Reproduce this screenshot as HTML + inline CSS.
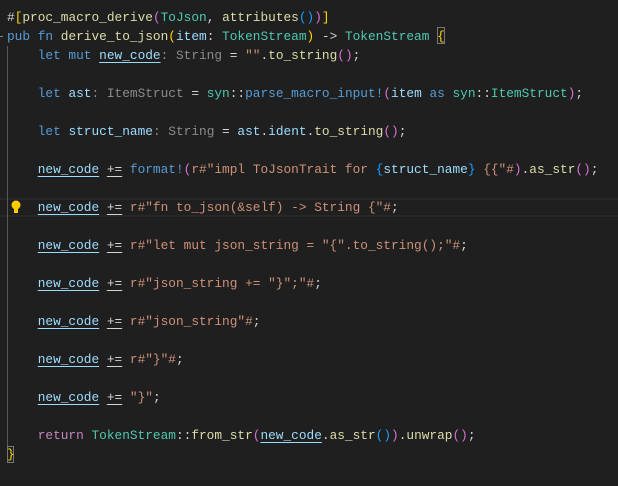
<!DOCTYPE html>
<html><head><meta charset="utf-8"><style>
body{margin:0;width:618px;height:486px;background:#1f1f1f;overflow:hidden;position:relative;font-family:"Liberation Mono",monospace;font-size:12.8px;color:#d4d4d4}
.l{position:absolute;left:7px;height:19px;line-height:19px;white-space:pre}
.k{color:#569cd6}.c{color:#c586c0}.t{color:#4ec9b0}.f{color:#dcdcaa}.v{color:#9cdcfe}.s{color:#ce9178}.h{color:#8b8b8b}
.g{color:#ffd700}.o{color:#da70d6}.b{color:#179fff}
.u{text-decoration:underline;text-underline-offset:3px}
.cur{position:absolute;left:0;width:618px;top:198px;height:19px;border-top:2px solid #282828;border-bottom:2px solid #282828;box-sizing:border-box}
</style></head><body>
<div class="cur"></div>
<div style="position:absolute;left:7px;top:46px;width:1px;height:400px;background:#585858"></div>
<div style="position:absolute;left:0;top:36px;width:3px;height:1px;background:#888"></div>
<div style="position:absolute;left:7px;top:446px;width:7px;height:17px;border:1px solid #777;box-sizing:border-box"></div>
<div style="position:absolute;left:437px;top:27px;width:8px;height:17px;border:1px solid #777;box-sizing:border-box"></div>
<svg style="position:absolute;left:10px;top:199px" width="12" height="16" viewBox="0 0 12 16"><circle cx="6" cy="6" r="4.5" fill="#ffcc00"/><rect x="4" y="10" width="4" height="4" fill="#ffcc00"/></svg>
<div class="l" style="top:8px">#<span class="g">[</span><span class="f">proc_macro_derive</span><span class="o">(</span><span class="t">ToJson</span>, <span class="f">attributes</span><span class="b">()</span><span class="o">)</span><span class="g">]</span></div>
<div class="l" style="top:27px"><span class="k">pub fn</span> <span class="f">derive_to_json</span><span class="g">(</span><span class="v">item</span>: <span class="t">TokenStream</span><span class="g">)</span> -&gt; <span class="t">TokenStream</span> <span class="g">{</span></div>
<div class="l" style="top:46px">    <span class="k">let mut</span> <span class="v u">new_code</span><span class="h">: String</span> = <span class="s">""</span>.<span class="f">to_string</span><span class="o">()</span>;</div>
<div class="l" style="top:84px">    <span class="k">let</span> <span class="v">ast</span><span class="h">: ItemStruct</span> = <span class="t">syn</span>::<span class="k">parse_macro_input!</span><span class="o">(</span><span class="v">item</span> <span class="k">as</span> <span class="t">syn</span>::<span class="t">ItemStruct</span><span class="o">)</span>;</div>
<div class="l" style="top:122px">    <span class="k">let</span> <span class="v">struct_name</span><span class="h">: String</span> = <span class="v">ast</span>.<span class="v">ident</span>.<span class="f">to_string</span><span class="o">()</span>;</div>
<div class="l" style="top:160px">    <span class="v u">new_code</span> <span class="u">+=</span> <span class="k">format!</span><span class="o">(</span><span class="s">r#"impl ToJsonTrait for </span><span class="b">{</span><span class="v">struct_name</span><span class="b">}</span><span class="s"> {{"#</span><span class="o">)</span>.<span class="f">as_str</span><span class="o">()</span>;</div>
<div class="l" style="top:198px">    <span class="v u">new_code</span> <span class="u">+=</span> <span class="s">r#"fn to_json(&amp;self) -&gt; String {"#</span>;</div>
<div class="l" style="top:236px">    <span class="v u">new_code</span> <span class="u">+=</span> <span class="s">r#"let mut json_string = "{".to_string();"#</span>;</div>
<div class="l" style="top:274px">    <span class="v u">new_code</span> <span class="u">+=</span> <span class="s">r#"json_string += "}";"#</span>;</div>
<div class="l" style="top:312px">    <span class="v u">new_code</span> <span class="u">+=</span> <span class="s">r#"json_string"#</span>;</div>
<div class="l" style="top:350px">    <span class="v u">new_code</span> <span class="u">+=</span> <span class="s">r#"}"#</span>;</div>
<div class="l" style="top:388px">    <span class="v u">new_code</span> <span class="u">+=</span> <span class="s">"}"</span>;</div>
<div class="l" style="top:426px">    <span class="c">return</span> <span class="t">TokenStream</span>::<span class="f">from_str</span><span class="o">(</span><span class="v u">new_code</span>.<span class="f">as_str</span><span class="b">()</span><span class="o">)</span>.<span class="f">unwrap</span><span class="o">()</span>;</div>
<div class="l" style="top:445px"><span class="g">}</span></div>
</body></html>
